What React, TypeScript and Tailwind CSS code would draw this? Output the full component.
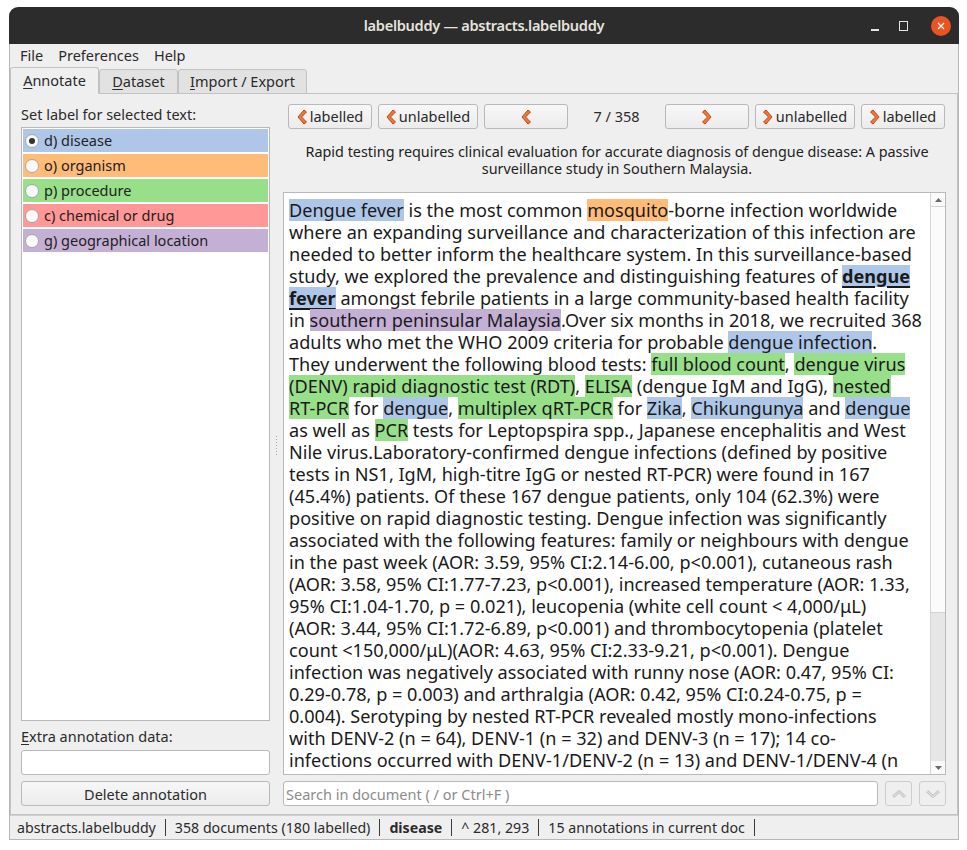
import React from "react";

type L = "d" | "o" | "p" | "c" | "g";
type Seg = string | [string, L, boolean?];

const labelBg: Record<L, string> = {
  d: "bg-[#aec7e8]",
  o: "bg-[#ffbb78]",
  p: "bg-[#98df8a]",
  c: "bg-[#ff9896]",
  g: "bg-[#c5b0d5]",
};

const labels: { key: L; text: string }[] = [
  { key: "d", text: "d) disease" },
  { key: "o", text: "o) organism" },
  { key: "p", text: "p) procedure" },
  { key: "c", text: "c) chemical or drug" },
  { key: "g", text: "g) geographical location" },
];

// document text, one entry per displayed line
const lines: Seg[][] = [
  [["Dengue fever", "d"], " is the most common ", ["mosquito", "o"], "-borne infection worldwide"],
  ["where an expanding surveillance and characterization of this infection are"],
  ["needed to better inform the healthcare system. In this surveillance-based"],
  ["study, we explored the prevalence and distinguishing features of ", ["dengue", "d", true]],
  [["fever", "d", true], " amongst febrile patients in a large community-based health facility"],
  ["in ", ["southern peninsular Malaysia", "g"], ".Over six months in 2018, we recruited 368"],
  ["adults who met the WHO 2009 criteria for probable ", ["dengue infection", "d"], "."],
  ["They underwent the following blood tests: ", ["full blood count", "p"], ", ", ["dengue virus", "p"]],
  [["(DENV) rapid diagnostic test (RDT)", "p"], ", ", ["ELISA", "p"], " (dengue IgM and IgG), ", ["nested", "p"]],
  [["RT-PCR", "p"], " for ", ["dengue", "d"], ", ", ["multiplex qRT-PCR", "p"], " for ", ["Zika", "d"], ", ", ["Chikungunya", "d"], " and ", ["dengue", "d"]],
  ["as well as ", ["PCR", "p"], " tests for Leptopspira spp., Japanese encephalitis and West"],
  ["Nile virus.Laboratory-confirmed dengue infections (defined by positive"],
  ["tests in NS1, IgM, high-titre IgG or nested RT-PCR) were found in 167"],
  ["(45.4%) patients. Of these 167 dengue patients, only 104 (62.3%) were"],
  ["positive on rapid diagnostic testing. Dengue infection was significantly"],
  ["associated with the following features: family or neighbours with dengue"],
  ["in the past week (AOR: 3.59, 95% CI:2.14-6.00, p<0.001), cutaneous rash"],
  ["(AOR: 3.58, 95% CI:1.77-7.23, p<0.001), increased temperature (AOR: 1.33,"],
  ["95% CI:1.04-1.70, p = 0.021), leucopenia (white cell count < 4,000/μL)"],
  ["(AOR: 3.44, 95% CI:1.72-6.89, p<0.001) and thrombocytopenia (platelet"],
  ["count <150,000/μL)(AOR: 4.63, 95% CI:2.33-9.21, p<0.001). Dengue"],
  ["infection was negatively associated with runny nose (AOR: 0.47, 95% CI:"],
  ["0.29-0.78, p = 0.003) and arthralgia (AOR: 0.42, 95% CI:0.24-0.75, p ="],
  ["0.004). Serotyping by nested RT-PCR revealed mostly mono-infections"],
  ["with DENV-2 (n = 64), DENV-1 (n = 32) and DENV-3 (n = 17); 14 co-"],
  ["infections occurred with DENV-1/DENV-2 (n = 13) and DENV-1/DENV-4 (n"],
  ["= 1). Platelet count, white cell count and fever were the strongest"],
];

const Chevron = ({ dir }: { dir: "left" | "right" }) => (
  <svg width="10" height="16" viewBox="0 0 10 16" className="shrink-0">
    <polygon
      points={dir === "left" ? "7,1 9.5,3 4.5,8 9.5,13 7,15 1,8" : "3,1 0.5,3 5.5,8 0.5,13 3,15 9,8"}
      fill="#ec7a3c"
      stroke="#c1440e"
      strokeWidth="1"
      strokeLinejoin="round"
    />
  </svg>
);

const NavButton = ({ w, dir, text }: { w: string; dir: "left" | "right"; text?: string }) => (
  <button
    className={`${w} h-[25px] flex items-center justify-center gap-[3px] rounded-[3px] border border-[#b9b9b9] bg-gradient-to-b from-[#f7f7f7] to-[#ececec] text-[14.5px] text-[#2a2a2a]`}
  >
    <Chevron dir={dir} />
    {text && <span>{text}</span>}
  </button>
);

const ArrowBtn = ({ up }: { up: boolean }) => (
  <button className="w-[27px] h-[25px] flex items-center justify-center rounded-[3px] border border-[#cdcdcd] bg-[#efefef]">
    <svg width="16" height="10" viewBox="0 0 16 10">
      <polyline
        points={up ? "2,8 8,2.5 14,8" : "2,2 8,7.5 14,2"}
        fill="none"
        stroke="#c4c4c4"
        strokeWidth="3"
        strokeLinejoin="round"
      />
      <polyline
        points={up ? "2,8 8,2.5 14,8" : "2,2 8,7.5 14,2"}
        fill="none"
        stroke="#e9e9e9"
        strokeWidth="1"
      />
    </svg>
  </button>
);

const StatusSep = () => <div className="w-px h-[17px] bg-[#3a3a3a] mx-[9px]" />;

export default function App() {
  return (
    <div className="w-[967px] h-[850px] bg-white pt-[7px] pl-[9px] font-['Noto_Sans',sans-serif] text-[#2b2b2b]">
      <div className="w-[950px] h-[833px] flex flex-col">
        {/* title bar */}
        <div className="h-[37px] shrink-0 rounded-t-[9px] bg-[#2c2c2c] relative flex items-center justify-center">
          <span className="text-[14.6px] font-semibold tracking-[-0.3px] text-[#e6e3de]">labelbuddy — abstracts.labelbuddy</span>
          <div className="absolute right-[8px] top-0 h-full flex items-center gap-[17px]">
            <div className="w-[8px] h-[2px] bg-[#e6e3de] mt-[8px]" />
            <div className="w-[9px] h-[10px] border border-[#e6e3de] ml-[3px]" />
            <div className="w-[20px] h-[20px] rounded-full bg-[#e95420] flex items-center justify-center ml-[6px]">
              <svg width="8" height="8" viewBox="0 0 8 8">
                <path d="M1 1 L7 7 M7 1 L1 7" stroke="#fff" strokeWidth="1.3" />
              </svg>
            </div>
          </div>
        </div>

        <div className="flex-1 flex flex-col bg-[#efefef] border-x border-b border-[#b7b7b7]">
          {/* menu bar */}
          <div className="h-[23px] shrink-0 flex items-center gap-[15px] pl-[10px] text-[14.5px] text-[#2b2b2b]">
            <span>File</span>
            <span>Preferences</span>
            <span>Help</span>
          </div>

          {/* tabs */}
          <div className="h-[27px] shrink-0 flex items-end text-[14.5px] relative z-10">
            <div className="h-[27px] w-[89px] flex items-center justify-center border border-b-0 border-[#c2c2c2] rounded-t-[3px] bg-[#efefef]">
              <span><span className="underline underline-offset-2">A</span>nnotate</span>
            </div>
            <div className="h-[25px] w-[79px] flex items-center justify-center border border-[#c2c2c2] rounded-t-[3px] bg-[#e2e2e2]">
              <span><span className="underline underline-offset-2">D</span>ataset</span>
            </div>
            <div className="h-[25px] w-[129px] flex items-center justify-center border border-[#c2c2c2] rounded-t-[3px] bg-[#e2e2e2]">
              <span><span className="underline underline-offset-2">I</span>mport / Export</span>
            </div>
          </div>

          {/* tab panel */}
          <div className="h-[722px] shrink-0 -mt-px border border-[#c2c2c2] flex pl-[10px] pr-[10px] pt-[10px] pb-[8px]">
            {/* left column */}
            <div className="w-[249px] shrink-0 flex flex-col">
              <div className="h-[23px] text-[14.5px] leading-[18px] pt-[1px]">Set label for selected text:</div>
              <div className="h-[594px] border border-[#b9b9b9] bg-white pt-px px-px flex flex-col gap-[2px]">
                {labels.map((l, i) => (
                  <div key={l.key} className={`h-[23px] flex items-center gap-[5px] pl-[2px] ${labelBg[l.key]}`}>
                    <div className="w-[14px] h-[14px] rounded-full border border-[#a9a9a9] bg-gradient-to-b from-[#f4f4f4] to-white flex items-center justify-center">
                      {i === 0 && <div className="w-[6px] h-[6px] rounded-full bg-[#333]" />}
                    </div>
                    <span className="text-[14.5px] text-[#222]">{l.text}</span>
                  </div>
                ))}
              </div>
              <div className="mt-[6px] h-[18px] text-[14.5px] leading-[18px]">
                <span className="underline underline-offset-2">E</span>xtra annotation data:
              </div>
              <div className="mt-[5px] h-[25px] border border-[#b9b9b9] rounded-[3px] bg-white" />
              <button className="mt-[6px] h-[25px] rounded-[3px] border border-[#b9b9b9] bg-gradient-to-b from-[#f7f7f7] to-[#ececec] text-[14.5px] leading-[18px]">
                Delete annotation
              </button>
            </div>

            {/* splitter */}
            <div className="w-[13px] shrink-0 flex items-center justify-center">
              <div className="flex flex-col gap-[2px] mt-[-20px]">
                {[0, 1, 2, 3, 4, 5, 6].map((i) => (
                  <div key={i} className="w-px h-px bg-[#a8a8a8]" />
                ))}
              </div>
            </div>

            {/* right column */}
            <div className="w-[663px] shrink-0 flex flex-col">
              <div className="h-[25px] flex items-center pl-[5px] gap-[6px]">
                <NavButton w="w-[84px]" dir="left" text="labelled" />
                <NavButton w="w-[100px]" dir="left" text="unlabelled" />
                <NavButton w="w-[84px]" dir="left" />
                <div className="w-[85px] text-center text-[14.5px]">7 / 358</div>
                <NavButton w="w-[84px]" dir="right" />
                <NavButton w="w-[100px]" dir="right" text="unlabelled" />
                <NavButton w="w-[84px]" dir="right" text="labelled" />
              </div>
              <div className="h-[63px] flex flex-col items-center justify-center text-center text-[14.4px] leading-[16.5px] pl-[5px] text-[#222]">
                <div>Rapid testing requires clinical evaluation for accurate diagnosis of dengue disease: A passive</div>
                <div>surveillance study in Southern Malaysia.</div>
              </div>

              {/* document view */}
              <div className="h-[583px] border border-[#b9b9b9] bg-white flex overflow-hidden">
                <div className="flex-1 overflow-hidden pl-[5px] pt-[6px] text-[18.1px] leading-[22px] text-[#1a1a1a]">
                  {lines.map((line, i) => (
                    <div key={i} className="h-[22px] whitespace-pre">
                      {line.map((s, j) =>
                        typeof s === "string" ? (
                          <span key={j}>{s}</span>
                        ) : (
                          <span
                            key={j}
                            className={`inline-block h-[22px] ${labelBg[s[1]]} ${s[2] ? "font-bold underline decoration-2 underline-offset-[3px]" : ""}`}
                          >
                            {s[0]}
                          </span>
                        )
                      )}
                    </div>
                  ))}
                </div>
                {/* scrollbar */}
                <div className="w-[15px] shrink-0 flex flex-col border-l border-[#d6d6d6] bg-[#fafafa]">
                  <div className="h-[13px] flex items-center justify-center">
                    <svg width="7" height="4" viewBox="0 0 7 4">
                      <polygon points="0,4 3.5,0 7,4" fill="#6a6a6a" />
                    </svg>
                  </div>
                  <div className="h-[407px] border-y border-[#d2d2d2] bg-[#fbfbfb]" />
                  <div className="flex-1 bg-[#e6e6e6]" />
                  <div className="h-[13px] flex items-center justify-center bg-[#fafafa]">
                    <svg width="7" height="4" viewBox="0 0 7 4">
                      <polygon points="0,0 3.5,4 7,0" fill="#6a6a6a" />
                    </svg>
                  </div>
                </div>
              </div>

              {/* search */}
              <div className="mt-[6px] h-[25px] flex gap-[7px]">
                <div className="flex-1 border border-[#b9b9b9] rounded-[3px] bg-white flex items-center pl-[2px] text-[14.5px] leading-[18px] text-[#8c8c8c]">
                  Search in document ( / or Ctrl+F )
                </div>
                <ArrowBtn up />
                <ArrowBtn up={false} />
              </div>
            </div>
          </div>

          {/* status bar */}
          <div className="flex-1 flex items-center pl-[7px] text-[14.2px] text-[#2b2b2b] border-t border-[#d0d0d0]">
            <span>abstracts.labelbuddy</span>
            <StatusSep />
            <span>358 documents (180 labelled)</span>
            <StatusSep />
            <span className="font-bold">disease</span>
            <StatusSep />
            <span>^ 281, 293</span>
            <StatusSep />
            <span>15 annotations in current doc</span>
            <StatusSep />
          </div>
        </div>
      </div>
    </div>
  );
}
